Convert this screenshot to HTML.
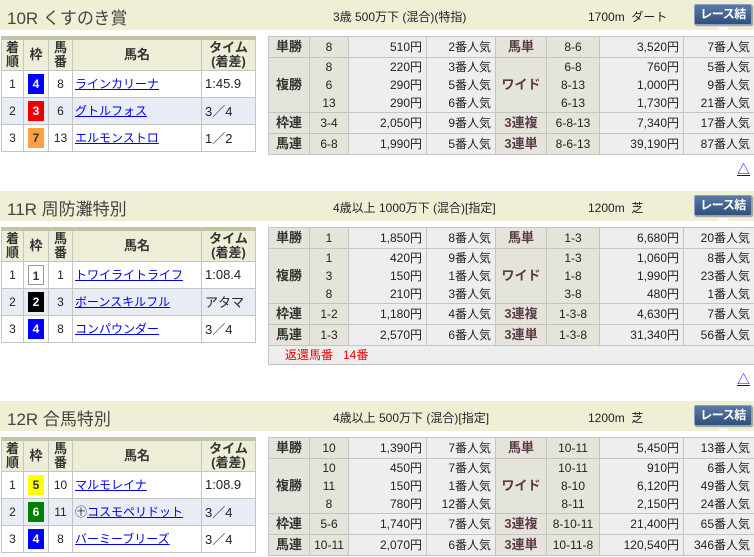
<!DOCTYPE html>
<html><head><meta charset="utf-8">
<style>
*{box-sizing:border-box;margin:0;padding:0}
body{width:754px;height:557px;overflow:hidden;background:#fff;font-family:"Liberation Sans","Noto Sans CJK JP",sans-serif;font-size:12px;color:#222;position:relative}
.sec{position:absolute;left:0;width:754px}
.hd{position:absolute;left:0;top:0;width:754px;height:30px;background:#efefd6}
.ttl{position:absolute;left:7px;top:4px;font-size:17px;color:#444;letter-spacing:0}
.cond{position:absolute;left:333px;top:8px;font-size:12px;color:#222}
.dist{position:absolute;left:588px;top:8px;font-size:12px;color:#222}
.btn{position:absolute;left:694px;top:4px;width:58px;height:21px;background:linear-gradient(#5b7aa6,#2f4f7c);border:1px solid #8aa0bf;border-radius:2px;color:#fff;font-weight:bold;font-size:12px;text-align:center;line-height:19px;box-shadow:1px 1px 1px #999;letter-spacing:-0.5px}
table{border-collapse:collapse;table-layout:fixed;position:absolute}
td{border:1px solid #c4c4c4;text-align:center;padding:0;white-space:nowrap;overflow:hidden}
.lt{left:1px;top:36px;width:254px;border-top:4px solid #c3c3a6}
.lt th{background:#eeeed8;border:1px solid #c4c4c4;height:32px;font-size:13px;line-height:14px;font-weight:bold;color:#333}
.lt td{height:27px}
.lt tr.b td{background:#e8ecf4}
.lt td.nm{text-align:left;padding-left:2px}
.lt td.tm{text-align:left;padding-left:3px;font-size:13px}
a{color:#0000ee;text-decoration:underline}
.w{display:inline-block;width:16px;height:20px;line-height:20px;font-weight:bold;color:#fff;font-size:12px}
.rt{left:268px;top:36px;width:486px}
.rt td{background:#eeeeee;height:21px;line-height:18px}
.rt td.l{background:#e4e4da;font-weight:bold;color:#333;font-size:13px}
.rt td.m{background:#e4e4da;font-weight:bold;color:#5a3a4a;font-size:13px}
.rt td.v{background:#e4e4da}
.rt td.r{text-align:right;padding-right:4px}
.up{position:absolute;left:737px;color:#0000ee;text-decoration:underline;font-size:13px}
.ref{background:#eeeeee!important;color:#e00;text-align:left!important;padding-left:16px!important}
</style></head><body>

<!-- 10R -->
<div class="sec" style="top:0">
<div class="hd"><span class="ttl">10R くすのき賞</span><span class="cond">3歳 500万下 (混合)(特指)</span><span class="dist">1700m&nbsp; ダート</span><div class="btn">レース結果</div></div>
<table class="lt"><colgroup><col style="width:22px"><col style="width:25px"><col style="width:24px"><col style="width:129px"><col style="width:54px"></colgroup>
<tr><th>着<br>順</th><th>枠</th><th>馬<br>番</th><th>馬名</th><th>タイム<br>(着差)</th></tr>
<tr><td>1</td><td><span class="w" style="background:#0000ff">4</span></td><td>8</td><td class="nm"><a>ラインカリーナ</a></td><td class="tm">1:45.9</td></tr>
<tr class="b"><td>2</td><td><span class="w" style="background:#ee0000">3</span></td><td>6</td><td class="nm"><a>グトルフォス</a></td><td class="tm">3／4</td></tr>
<tr><td>3</td><td><span class="w" style="background:#ffa040;color:#333">7</span></td><td>13</td><td class="nm"><a>エルモンストロ</a></td><td class="tm">1／2</td></tr>
</table>
<table class="rt"><colgroup><col style="width:41px"><col style="width:39px"><col style="width:78px"><col style="width:69px"><col style="width:51px"><col style="width:53px"><col style="width:84px"><col style="width:71px"></colgroup>
<tr><td class="l">単勝</td><td class="v">8</td><td class="r">510円</td><td class="r">2番人気</td><td class="m">馬単</td><td class="v">8-6</td><td class="r">3,520円</td><td class="r">7番人気</td></tr>
<tr><td class="l" style="height:55px">複勝</td><td class="v">8<br>6<br>13</td><td class="r">220円<br>290円<br>290円</td><td class="r">3番人気<br>5番人気<br>6番人気</td><td class="m">ワイド</td><td class="v">6-8<br>8-13<br>6-13</td><td class="r">760円<br>1,000円<br>1,730円</td><td class="r">5番人気<br>9番人気<br>21番人気</td></tr>
<tr><td class="l">枠連</td><td class="v">3-4</td><td class="r">2,050円</td><td class="r">9番人気</td><td class="m">3連複</td><td class="v">6-8-13</td><td class="r">7,340円</td><td class="r">17番人気</td></tr>
<tr><td class="l">馬連</td><td class="v">6-8</td><td class="r">1,990円</td><td class="r">5番人気</td><td class="m">3連単</td><td class="v">8-6-13</td><td class="r">39,190円</td><td class="r">87番人気</td></tr>
</table>
<span class="up" style="top:159px">△</span>
</div>

<!-- 11R -->
<div class="sec" style="top:191px">
<div class="hd"><span class="ttl">11R 周防灘特別</span><span class="cond">4歳以上 1000万下 (混合)[指定]</span><span class="dist">1200m&nbsp; 芝</span><div class="btn">レース結果</div></div>
<table class="lt"><colgroup><col style="width:22px"><col style="width:25px"><col style="width:24px"><col style="width:129px"><col style="width:54px"></colgroup>
<tr><th>着<br>順</th><th>枠</th><th>馬<br>番</th><th>馬名</th><th>タイム<br>(着差)</th></tr>
<tr><td>1</td><td><span class="w" style="background:#fff;color:#333;border:1px solid #999">1</span></td><td>1</td><td class="nm"><a>トワイライトライフ</a></td><td class="tm">1:08.4</td></tr>
<tr class="b"><td>2</td><td><span class="w" style="background:#000">2</span></td><td>3</td><td class="nm"><a>ボーンスキルフル</a></td><td class="tm">アタマ</td></tr>
<tr><td>3</td><td><span class="w" style="background:#0000ff">4</span></td><td>8</td><td class="nm"><a>コンパウンダー</a></td><td class="tm">3／4</td></tr>
</table>
<table class="rt"><colgroup><col style="width:41px"><col style="width:39px"><col style="width:78px"><col style="width:69px"><col style="width:51px"><col style="width:53px"><col style="width:84px"><col style="width:71px"></colgroup>
<tr><td class="l">単勝</td><td class="v">1</td><td class="r">1,850円</td><td class="r">8番人気</td><td class="m">馬単</td><td class="v">1-3</td><td class="r">6,680円</td><td class="r">20番人気</td></tr>
<tr><td class="l" style="height:55px">複勝</td><td class="v">1<br>3<br>8</td><td class="r">420円<br>150円<br>210円</td><td class="r">9番人気<br>1番人気<br>3番人気</td><td class="m">ワイド</td><td class="v">1-3<br>1-8<br>3-8</td><td class="r">1,060円<br>1,990円<br>480円</td><td class="r">8番人気<br>23番人気<br>1番人気</td></tr>
<tr><td class="l">枠連</td><td class="v">1-2</td><td class="r">1,180円</td><td class="r">4番人気</td><td class="m">3連複</td><td class="v">1-3-8</td><td class="r">4,630円</td><td class="r">7番人気</td></tr>
<tr><td class="l">馬連</td><td class="v">1-3</td><td class="r">2,570円</td><td class="r">6番人気</td><td class="m">3連単</td><td class="v">1-3-8</td><td class="r">31,340円</td><td class="r">56番人気</td></tr>
<tr><td colspan="8" class="ref" style="height:19px">返還馬番&nbsp;&nbsp; 14番</td></tr>
</table>
<span class="up" style="top:178px">△</span>
</div>

<!-- 12R -->
<div class="sec" style="top:401px">
<div class="hd"><span class="ttl">12R 合馬特別</span><span class="cond">4歳以上 500万下 (混合)[指定]</span><span class="dist">1200m&nbsp; 芝</span><div class="btn">レース結果</div></div>
<table class="lt"><colgroup><col style="width:22px"><col style="width:25px"><col style="width:24px"><col style="width:129px"><col style="width:54px"></colgroup>
<tr><th>着<br>順</th><th>枠</th><th>馬<br>番</th><th>馬名</th><th>タイム<br>(着差)</th></tr>
<tr><td>1</td><td><span class="w" style="background:#ffff00;color:#333">5</span></td><td>10</td><td class="nm"><a>マルモレイナ</a></td><td class="tm">1:08.9</td></tr>
<tr class="b"><td>2</td><td><span class="w" style="background:#008000">6</span></td><td>11</td><td class="nm">㊉<a>コスモペリドット</a></td><td class="tm">3／4</td></tr>
<tr><td>3</td><td><span class="w" style="background:#0000ff">4</span></td><td>8</td><td class="nm"><a>バーミーブリーズ</a></td><td class="tm">3／4</td></tr>
</table>
<table class="rt"><colgroup><col style="width:41px"><col style="width:39px"><col style="width:78px"><col style="width:69px"><col style="width:51px"><col style="width:53px"><col style="width:84px"><col style="width:71px"></colgroup>
<tr><td class="l">単勝</td><td class="v">10</td><td class="r">1,390円</td><td class="r">7番人気</td><td class="m">馬単</td><td class="v">10-11</td><td class="r">5,450円</td><td class="r">13番人気</td></tr>
<tr><td class="l" style="height:55px">複勝</td><td class="v">10<br>11<br>8</td><td class="r">450円<br>150円<br>780円</td><td class="r">7番人気<br>1番人気<br>12番人気</td><td class="m">ワイド</td><td class="v">10-11<br>8-10<br>8-11</td><td class="r">910円<br>6,120円<br>2,150円</td><td class="r">6番人気<br>49番人気<br>24番人気</td></tr>
<tr><td class="l">枠連</td><td class="v">5-6</td><td class="r">1,740円</td><td class="r">7番人気</td><td class="m">3連複</td><td class="v">8-10-11</td><td class="r">21,400円</td><td class="r">65番人気</td></tr>
<tr><td class="l">馬連</td><td class="v">10-11</td><td class="r">2,070円</td><td class="r">6番人気</td><td class="m">3連単</td><td class="v">10-11-8</td><td class="r">120,540円</td><td class="r">346番人気</td></tr>
</table>
</div>
</body></html>
